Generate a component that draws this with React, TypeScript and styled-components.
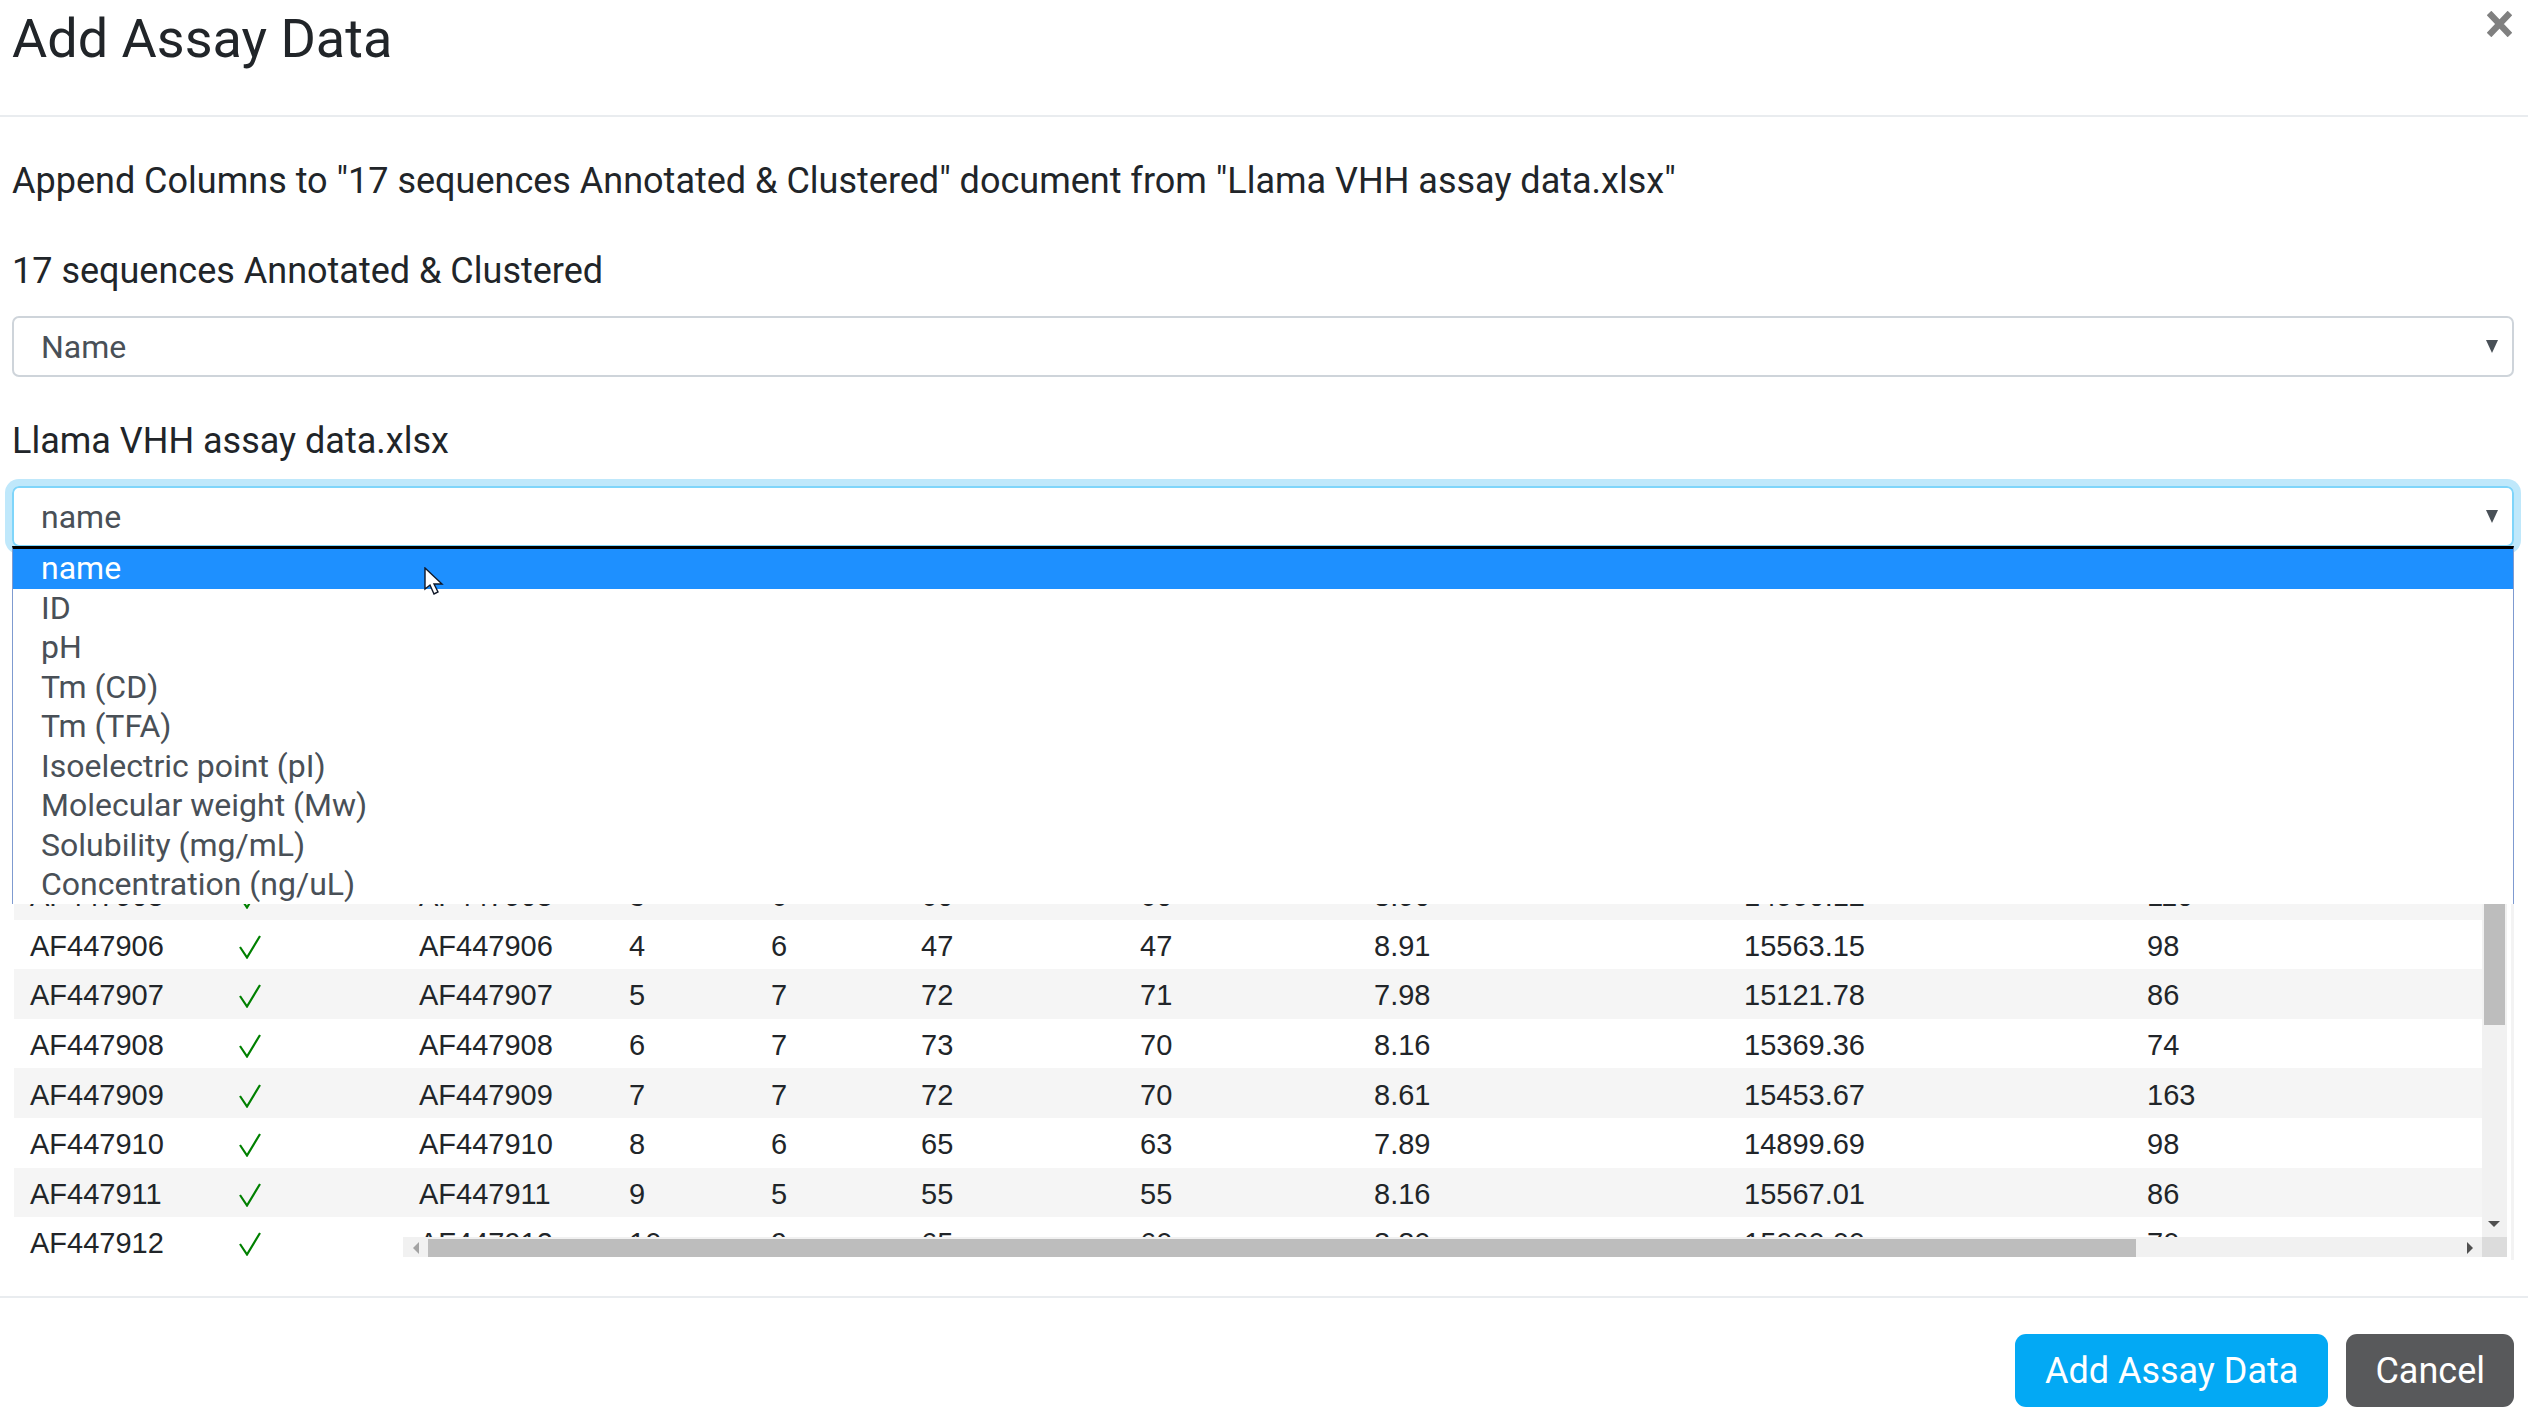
import type { FC } from "react";
import styled, { createGlobalStyle } from "styled-components";

const GlobalStyle = createGlobalStyle`
  html, body {
    margin: 0;
    padding: 0;
    background: #fff;
  }
  body {
    width: 2528px;
    height: 1410px;
    overflow: hidden;
    font-family: Roboto, "Liberation Sans", sans-serif;
    color: #212529;
  }
`;

const ROW_HEIGHT = 49.6;

const OPTIONS = [
  "name",
  "ID",
  "pH",
  "Tm (CD)",
  "Tm (TFA)",
  "Isoelectric point (pI)",
  "Molecular weight (Mw)",
  "Solubility (mg/mL)",
  "Concentration (ng/uL)",
];

const ROWS = [
  ["AF447905", "AF447905", "3", "6", "60", "60", "8.90", "14990.12", "110"],
  ["AF447906", "AF447906", "4", "6", "47", "47", "8.91", "15563.15", "98"],
  ["AF447907", "AF447907", "5", "7", "72", "71", "7.98", "15121.78", "86"],
  ["AF447908", "AF447908", "6", "7", "73", "70", "8.16", "15369.36", "74"],
  ["AF447909", "AF447909", "7", "7", "72", "70", "8.61", "15453.67", "163"],
  ["AF447910", "AF447910", "8", "6", "65", "63", "7.89", "14899.69", "98"],
  ["AF447911", "AF447911", "9", "5", "55", "55", "8.16", "15567.01", "86"],
  ["AF447912", "AF447912", "10", "9", "65", "60", "8.80", "15000.00", "70"],
];

const PINNED_WIDTHS = [225, 164];
const CENTER_WIDTHS = [226, 142, 150, 219, 234, 370, 403, 337];

const Modal = styled.div`
  width: 2528px;
  height: 1410px;
  display: flex;
  flex-direction: column;
  overflow: hidden;
`;

const Header = styled.header`
  height: 115px;
  flex: none;
  display: flex;
  justify-content: space-between;
  padding: 0 16px 0 12px;
  border-bottom: 2px solid #e9ecef;
`;

const Title = styled.h1`
  margin: 9px 0 0;
  font-size: 54px;
  line-height: 60px;
  font-weight: 400;
`;

const CloseButton = styled.button`
  border: none;
  background: none;
  padding: 0;
  margin-top: 11px;
  width: 25px;
  height: 26px;
  color: #808080;
  display: flex;
`;

const Body = styled.div`
  flex: none;
  box-sizing: border-box;
  height: 1179px;
  padding: 42px 14px 0 12px;
  display: flex;
  flex-direction: column;
`;

const Intro = styled.p`
  margin: 0 0 46px;
  font-size: 36px;
  line-height: 44px;
`;

const FieldLabel = styled.label`
  display: block;
  font-size: 36px;
  line-height: 44px;
  margin-bottom: 23px;
`;

const SelectBox = styled.div<{ $focused?: boolean }>`
  position: relative;
  height: 61px;
  box-sizing: border-box;
  border: 2px solid ${(props) => (props.$focused ? "#7fd5fa" : "#ced4da")};
  border-radius: 7px;
  box-shadow: ${(props) => (props.$focused ? "0 0 0 7px #bfe8fb" : "none")};
  padding: 0 26px 0 27px;
  display: flex;
  align-items: center;
  justify-content: space-between;
  font-size: 32px;
  color: #495057;
`;

const Caret = styled.span`
  width: 0;
  height: 0;
  border-left: 6.5px solid transparent;
  border-right: 6.5px solid transparent;
  border-top: 13px solid #495057;
  margin-right: -12px;
`;

const Field = styled.div`
  margin-bottom: 42px;
`;

const OpenField = styled.div`
  position: relative;
  z-index: 1;
`;

const OptionList = styled.ul`
  position: absolute;
  top: 60px;
  left: 0;
  right: 0;
  margin: 0;
  padding: 0;
  list-style: none;
  height: 358px;
  box-sizing: border-box;
  overflow: hidden;
  background: #fff;
  border-top: 3px solid #000;
  border-left: 1.5px solid #7f9bd0;
  border-right: 1.5px solid #7f9bd0;
  font-size: 32px;
  color: #495057;
`;

const OptionItem = styled.li<{ $active?: boolean }>`
  height: 39.5px;
  line-height: 39.5px;
  padding-left: 28px;
  background: ${(props) => (props.$active ? "#1e90ff" : "transparent")};
  color: ${(props) => (props.$active ? "#fff" : "#495057")};
`;

const CursorIcon = styled.svg`
  position: absolute;
  left: 412px;
  top: 81px;
`;

const Grid = styled.div`
  margin-top: 323px;
  height: 390px;
  display: flex;
  padding: 0 4px 0 2px;
  border-right: 3px solid #f3f3f3;
  font-family: "Liberation Sans", Arial, sans-serif;
  font-size: 29px;
  color: #212529;
`;

const PinnedPane = styled.div`
  width: 389px;
  flex: none;
  overflow: hidden;
`;

const CenterColumn = styled.div`
  flex: 1;
  display: flex;
  flex-direction: column;
  min-width: 0;
`;

const CenterArea = styled.div`
  display: flex;
  height: 367px;
`;

const CenterPane = styled.div`
  flex: 1;
  min-width: 0;
  overflow: hidden;
`;

const Row = styled.div<{ $striped: boolean }>`
  display: flex;
  align-items: center;
  height: ${ROW_HEIGHT}px;
  background: ${(props) => (props.$striped ? "#f5f5f5" : "#fff")};
`;

const Cell = styled.div<{ $width: number; $first?: boolean }>`
  flex: none;
  width: ${(props) => props.$width}px;
  padding-top: 3px;
  padding-left: ${(props) => (props.$first ? 16 : 0)}px;
  box-sizing: border-box;
  line-height: 32px;
  white-space: nowrap;
`;

const Check = styled.svg`
  display: block;
  margin-top: 2px;
`;

const VerticalTrack = styled.div`
  width: 25px;
  flex: none;
  background: #f1f1f1;
  display: flex;
  flex-direction: column;
  align-items: center;
  justify-content: space-between;
  padding: 0 2px 10px 0;
  box-sizing: border-box;
`;

const VerticalThumb = styled.div`
  width: 21px;
  height: 155px;
  margin-left: 2px;
  background: #bdbdbd;
`;

const ArrowDown = styled.span`
  width: 0;
  height: 0;
  border-left: 6px solid transparent;
  border-right: 6px solid transparent;
  border-top: 6px solid #505050;
`;

const HorizontalBar = styled.div`
  display: flex;
  height: 20px;
`;

const HorizontalTrack = styled.div`
  flex: 1;
  background: #f1f1f1;
  display: flex;
  align-items: center;
  padding-top: 2px;
  box-sizing: border-box;
`;

const ArrowLeftBox = styled.div`
  width: 25px;
  display: flex;
  justify-content: center;
`;

const ArrowLeft = styled.span`
  width: 0;
  height: 0;
  border-top: 6px solid transparent;
  border-bottom: 6px solid transparent;
  border-right: 6px solid #a3a3a3;
`;

const HorizontalThumb = styled.div`
  width: 1708px;
  height: 100%;
  background: #bdbdbd;
`;

const ArrowRight = styled.span`
  width: 0;
  height: 0;
  margin-left: auto;
  margin-right: 9px;
  border-top: 6px solid transparent;
  border-bottom: 6px solid transparent;
  border-left: 6px solid #505050;
`;

const ScrollCorner = styled.div`
  width: 25px;
  flex: none;
  background: #dcdcdc;
`;

const Footer = styled.footer`
  flex: 1;
  border-top: 2px solid #e9ecef;
  display: flex;
  justify-content: flex-end;
  align-items: flex-start;
  gap: 18px;
  padding: 36px 14px 0 0;
`;

const FooterButton = styled.button<{ $primary?: boolean }>`
  height: 73px;
  border: none;
  border-radius: 11px;
  padding: 0 ${(props) => (props.$primary ? 30 : 29)}px;
  font-family: Roboto, "Liberation Sans", sans-serif;
  font-size: 36px;
  color: #fff;
  background: ${(props) => (props.$primary ? "#03a9f4" : "#58595b")};
`;

const CheckMark: FC = () => (
  <Check width="22" height="24" viewBox="0 0 22 24" fill="none">
    <path d="M1 12 L8 22.5 L21 1" stroke="#008000" strokeWidth="2.2" />
  </Check>
);

const App: FC = () => (
  <Modal>
    <GlobalStyle />
    <Header>
      <Title>Add Assay Data</Title>
      <CloseButton aria-label="Close">
        <svg width="25" height="26" viewBox="0 0 25 26">
          <path d="M2 2 L23 24 M23 2 L2 24" stroke="currentColor" strokeWidth="6.5" />
        </svg>
      </CloseButton>
    </Header>
    <Body>
      <Intro>
        Append Columns to "17 sequences Annotated &amp; Clustered" document from "Llama VHH assay
        data.xlsx"
      </Intro>
      <FieldLabel>17 sequences Annotated &amp; Clustered</FieldLabel>
      <Field>
        <SelectBox>
          Name
          <Caret />
        </SelectBox>
      </Field>
      <FieldLabel>Llama VHH assay data.xlsx</FieldLabel>
      <OpenField>
        <SelectBox $focused>
          name
          <Caret />
        </SelectBox>
        <OptionList>
          {OPTIONS.map((option, i) => (
            <OptionItem key={option} $active={i === 0}>
              {option}
            </OptionItem>
          ))}
        </OptionList>
        <CursorIcon width="20" height="28" viewBox="0 0 20 28">
          <path
            d="M1 1 L1 22 L6 18 L10 27 L14 25 L10 17 L18 17 Z"
            fill="#fff"
            stroke="#101828"
            strokeWidth="1.4"
          />
        </CursorIcon>
      </OpenField>
      <Grid>
        <PinnedPane>
          {ROWS.map((row, i) => (
            <Row key={row[0]} $striped={i % 2 === 0}>
              <Cell $width={PINNED_WIDTHS[0]} $first>
                {row[0]}
              </Cell>
              <Cell $width={PINNED_WIDTHS[1]}>
                <CheckMark />
              </Cell>
            </Row>
          ))}
        </PinnedPane>
        <CenterColumn>
          <CenterArea>
            <CenterPane>
              {ROWS.map((row, i) => (
                <Row key={row[0]} $striped={i % 2 === 0}>
                  {row.slice(1).map((value, j) => (
                    <Cell key={j} $width={CENTER_WIDTHS[j]} $first={j === 0}>
                      {value}
                    </Cell>
                  ))}
                </Row>
              ))}
            </CenterPane>
            <VerticalTrack>
              <VerticalThumb />
              <ArrowDown />
            </VerticalTrack>
          </CenterArea>
          <HorizontalBar>
            <HorizontalTrack>
              <ArrowLeftBox>
                <ArrowLeft />
              </ArrowLeftBox>
              <HorizontalThumb />
              <ArrowRight />
            </HorizontalTrack>
            <ScrollCorner />
          </HorizontalBar>
        </CenterColumn>
      </Grid>
    </Body>
    <Footer>
      <FooterButton $primary>Add Assay Data</FooterButton>
      <FooterButton>Cancel</FooterButton>
    </Footer>
  </Modal>
);

export default App;
